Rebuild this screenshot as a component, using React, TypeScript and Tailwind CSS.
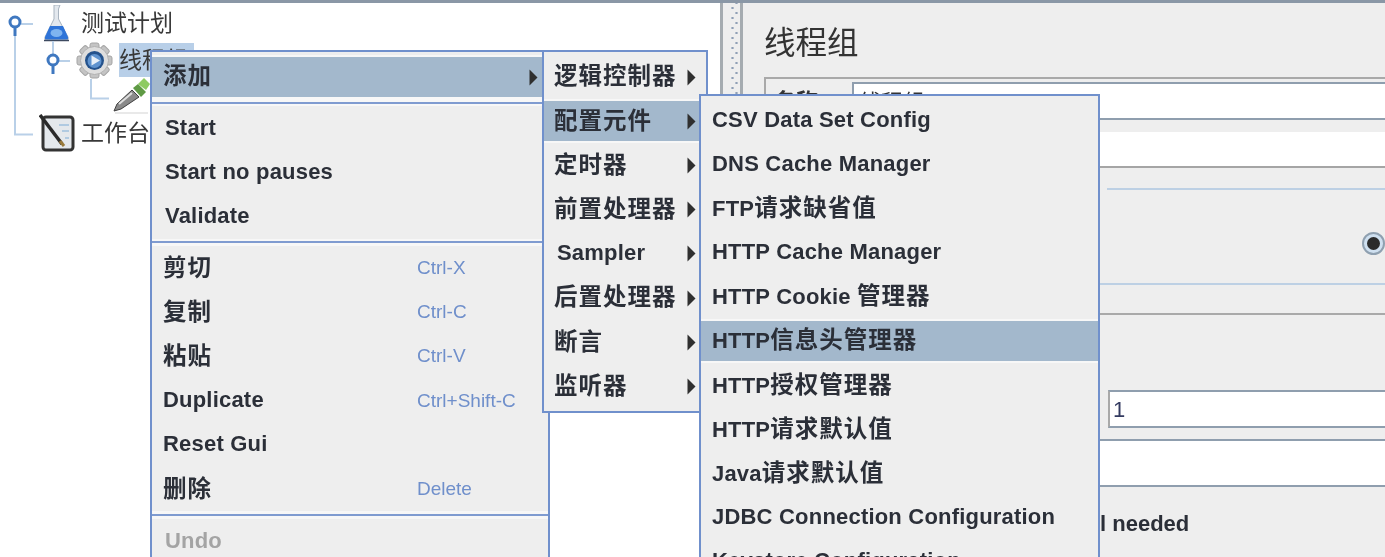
import type { ReactNode } from "react";

const FONT = "font-['Liberation_Sans','Noto_Sans_CJK_SC',sans-serif]";

function Arrow({ className = "" }: { className?: string }) {
  return (
    <svg width="9" height="17" viewBox="0 0 9 17" className={className}>
      <path d="M0.5 0.5 L8.500 8.500 L0.500 16.500 Z" fill="#2f2f2f" />
    </svg>
  );
}

// chinese runs have a wider advance than the latin ones in the menus
function Label({ text }: { text: string }) {
  const parts = text.match(/[\u4e00-\u9fff]+|[^\u4e00-\u9fff]+/g) ?? [];
  const latinOnly = parts.length === 1 && !/[\u4e00-\u9fff]/.test(text);
  return (
    <span className={latinOnly ? "pb-[2px]" : ""}>
      {parts.map((p, i) =>
        /[\u4e00-\u9fff]/.test(p) ? (
          <span key={i} className="text-[23.500px] tracking-[1px]">
            {p}
          </span>
        ) : (
          <span key={i} className="whitespace-pre">
            {p}
          </span>
        )
      )}
    </span>
  );
}

function Row({
  label,
  active,
  arrow,
  shortcut,
  muted,
  className = "",
}: {
  label: string;
  active?: boolean;
  arrow?: boolean;
  shortcut?: string;
  muted?: boolean;
  className?: string;
}) {
  return (
    <div
      className={`relative flex h-[44.2px] items-center whitespace-nowrap text-[22px] font-bold tracking-[0.2px] ${
        active ? "border-y-[2px] border-y-[#f7f7f7] bg-[#a3b8cc]" : ""
      } ${muted ? "text-[#a4a4a4]" : "text-[#2b2f38]"} ${className}`}
    >
      <Label text={label} />
      {shortcut && (
        <span className="absolute left-[265px] text-[19px] font-normal tracking-normal text-[#6f8fcb]">
          {shortcut}
        </span>
      )}
      {arrow && <Arrow className="absolute right-[10px]" />}
    </div>
  );
}

function Sep({ h }: { h: string }) {
  return (
    <div className={`flex items-center bg-[#f7f7f7] ${h}`}>
      <div className="h-[2px] w-full bg-[#7f9bd0]" />
    </div>
  );
}

function TreeLines() {
  return (
    <svg width="130" height="145" className="absolute left-0 top-0" fill="none">
      <path d="M15 32V131.500H33M33 21H21" stroke="#b9d0e8" strokeWidth="2" />
      <path d="M53 38V52M70 58H59M91 76V95.500H109" stroke="#b9d0e8" strokeWidth="2" />
      <circle cx="15" cy="19" r="5" stroke="#3f78c0" strokeWidth="3" />
      <path d="M15 24V33" stroke="#3f78c0" strokeWidth="3" />
      <circle cx="53" cy="57" r="5" stroke="#3f78c0" strokeWidth="3" />
      <path d="M53 62V71" stroke="#3f78c0" strokeWidth="3" />
    </svg>
  );
}

function Flask() {
  return (
    <svg width="27" height="37" viewBox="0 0 27 37">
      <path d="M11 0 H17 L15.500 4 V14 L25 32 Q26 35 23.500 35 H3.500 Q1 35 2 32 L11 14 V4 Z" fill="#e3e8ee" stroke="#a9b4c0" strokeWidth="1" />
      <path d="M7 21 H20 L25 32 Q25.500 34.500 23.500 34.500 H3.500 Q1.500 34.500 2 32 Z" fill="#2f74d8" />
      <ellipse cx="13.500" cy="28" rx="6" ry="4" fill="#7fb4f0" />
      <path d="M1 35.500 H26" stroke="#3d4a60" strokeWidth="1.500" />
    </svg>
  );
}

function Gear() {
  const teeth = [0, 45, 90, 135, 180, 225, 270, 315];
  return (
    <svg width="37" height="37" viewBox="0 0 37 37">
      {teeth.map((a) => (
        <rect key={a} x="14" y="1" width="9" height="9" rx="2" fill="#c4c4c4" stroke="#a5a5a5" transform={`rotate(${a} 18.500 18.500)`} />
      ))}
      <circle cx="18.500" cy="18.500" r="14" fill="#dedede" stroke="#b0b0b0" />
      <circle cx="18.500" cy="18.500" r="9.500" fill="#24528c" />
      <circle cx="18.500" cy="19" r="7" fill="#5f93cf" />
      <path d="M15.500 13.500 L24 18.500 L15.500 23.500 Z" fill="#e8f0f8" />
    </svg>
  );
}

function Dropper() {
  return (
    <svg width="40" height="36" viewBox="0 0 40 36">
      <path d="M2 33 L5 26 L20 12 L27 19 L9 31 Z" fill="#8a8a8a" stroke="#3f3f3f" />
      <path d="M7 26 L20 15" stroke="#dfdfdf" strokeWidth="2" />
      <path d="M21 10 L26 6 L34 14 L29 19 Z" fill="#5f9a45" />
      <path d="M26 6 L32 0 L38 6 L34 12 Z" fill="#8ecb62" />
      <path d="M3 35 H36" stroke="#e2e2e2" strokeWidth="1.500" />
    </svg>
  );
}

function Notepad() {
  return (
    <svg width="36" height="38" viewBox="0 0 36 38">
      <rect x="4" y="3" width="30" height="33" rx="3" fill="#e4e8ec" stroke="#333333" strokeWidth="3" />
      <path d="M20 11 H30 M23 17 H30 M26 24 H30" stroke="#9fc0dd" strokeWidth="1.500" />
      <path d="M1 1 L23 30" stroke="#2a2a2a" strokeWidth="3.500" />
      <path d="M21 27 L25 32" stroke="#9a7a3a" strokeWidth="3" />
    </svg>
  );
}

function TreeItem({ icon, label, pl, h, gap, selected }: { icon: ReactNode; label?: string; pl: string; h: string; gap?: string; selected?: boolean }) {
  return (
    <div className={`flex items-center ${pl} ${h}`}>
      {icon}
      {label && (
        <span className={`flex h-[34px] items-center whitespace-nowrap text-[23px] text-[#383838] ${gap ?? "ml-[6px]"} ${selected ? "bg-[#b8cfe8] pr-[6px]" : ""}`}>
          {label}
        </span>
      )}
    </div>
  );
}

export default function App() {
  return (
    <div className={`${FONT} h-[557px] w-[1385px] overflow-hidden bg-[#eeeeee] blur-[0.5px]`}>
      <div className="h-[3px] bg-[#8a97a6]" />
      <div className="relative flex h-[554px]">
        {/* tree */}
        <div className="relative w-[720px] shrink-0 bg-white pt-[1px]">
          <TreeLines />
          <TreeItem icon={<Flask />} label="测试计划" pl="pl-[43px]" h="h-[38px]" gap="ml-[11px]" />
          <TreeItem icon={<Gear />} label="线程组" pl="pl-[76px]" h="h-[36px]" selected />
          <TreeItem icon={<Dropper />} pl="pl-[112px]" h="h-[36px]" />
          <TreeItem icon={<Notepad />} label="工作台" pl="pl-[39px]" h="h-[38px]" />
        </div>

        {/* divider */}
        <div className="flex w-[23px] shrink-0 justify-center border-x-[3px] border-x-[#a5abb0] bg-[#eeeeee] pl-[6px]">
          <div className="h-full w-[9px] bg-[radial-gradient(circle,#8f9fb5_1px,transparent_1.300px),radial-gradient(circle,#8f9fb5_1px,transparent_1.300px)] bg-[length:9px_10px] bg-[position:-2px_0,2px_5px]" />
        </div>

        {/* right panel */}
        <div className="min-w-0 flex-1 text-[#333333]">
          <div className="flex h-[74px] items-center pl-[21px] pt-[7px] text-[31.500px] leading-none">线程组</div>
          <div className="ml-[21px] flex h-[43px] items-stretch border-y-[2px] border-l-[2px] border-y-[#a9a9a9] border-l-[#a9a9a9] border-b-[#8f9eae]">
            <span className="w-[86px] pl-[8px] pt-[6px] text-[22px] font-bold">名称:</span>
            <span className="mt-[3px] flex-1 border-l-[2px] border-t-[2px] border-[#8f9eae] bg-white pl-[5px] pt-[2px] text-[22px]">线程组</span>
          </div>
          <div className="h-[12px]" />
          <div className="ml-[21px] h-[36px] border-b-[2px] border-b-[#a5a5a5] bg-white" />
          <div className="h-[20px]" />
          <div className="ml-[364px] h-[2px] bg-[#bdd0e4]" />
          <div className="flex h-[93px] items-center justify-end pt-[13px]">
            <span className="flex h-[23px] w-[23px] items-center justify-center rounded-full border-[2px] border-[#8fa0b0] bg-[#cfe0f0]">
              <span className="h-[13px] w-[13px] rounded-full bg-[#2b2b2b]" />
            </span>
          </div>
          <div className="h-[2px] bg-[#bdd0e4]" />
          <div className="h-[28px]" />
          <div className="h-[2px] bg-[#a9a9a9]" />
          <div className="flex h-[113px] items-end pl-[365px]">
            <div className="flex h-[38px] w-full items-center border-[2px] border-r-0 border-l-[#a9a9a9] border-t-[#8f9eae] border-b-[#8f9eae] bg-white pl-[3px] text-[22px] text-[#333a60]">1</div>
          </div>
          <div className="h-[11px]" />
          <div className="h-[48px] border-y-[2px] border-y-[#8f9eae] bg-white" />
          <div className="flex h-[72px] items-center pl-[357px] text-[22px] font-bold text-[#2b2f38]">l needed</div>
        </div>
      </div>

      {/* main context menu */}
      <div className="absolute left-[150px] top-[50px] h-[520px] w-[400px] border-[2px] border-[#7090cc] bg-[#eeeeee] pt-[3px]">
        <Row label="添加" active arrow className="pl-[11px]" />
        <Sep h="h-[7px]" />
        <Row label="Start" className="pl-[13px]" />
        <Row label="Start no pauses" className="pl-[13px]" />
        <Row label="Validate" className="pl-[13px]" />
        <Sep h="h-[7.400px]" />
        <Row label="剪切" className="pl-[11px]" shortcut="Ctrl-X" />
        <Row label="复制" className="pl-[11px]" shortcut="Ctrl-C" />
        <Row label="粘贴" className="pl-[11px]" shortcut="Ctrl-V" />
        <Row label="Duplicate" className="pl-[11px]" shortcut="Ctrl+Shift-C" />
        <Row label="Reset Gui" className="pl-[11px]" />
        <Row label="删除" className="pl-[11px]" shortcut="Delete" />
        <Sep h="h-[8px]" />
        <Row label="Undo" muted className="pl-[13px]" />
      </div>

      {/* add submenu */}
      <div className="absolute left-[542px] top-[50px] w-[166px] border-[2px] border-[#7090cc] bg-[#eeeeee] pb-[2px] pt-[3px]">
        {["逻辑控制器", "配置元件", "定时器", "前置处理器", "Sampler", "后置处理器", "断言", "监听器"].map((label, i) => (
          <Row key={label} label={label} arrow active={i === 1} className={label === "Sampler" ? "pl-[13px]" : "pl-[10px]"} />
        ))}
      </div>

      {/* config element submenu */}
      <div className="absolute left-[699px] top-[94px] h-[480px] w-[401px] border-[2px] border-[#7090cc] bg-[#eeeeee] pt-[2px]">
        {[
          "CSV Data Set Config",
          "DNS Cache Manager",
          "FTP请求缺省值",
          "HTTP Cache Manager",
          "HTTP Cookie 管理器",
          "HTTP信息头管理器",
          "HTTP授权管理器",
          "HTTP请求默认值",
          "Java请求默认值",
          "JDBC Connection Configuration",
          "Keystore Configuration",
        ].map((label, i) => (
          <Row key={label} label={label} active={i === 5} className="pl-[11px]" />
        ))}
      </div>
    </div>
  );
}
